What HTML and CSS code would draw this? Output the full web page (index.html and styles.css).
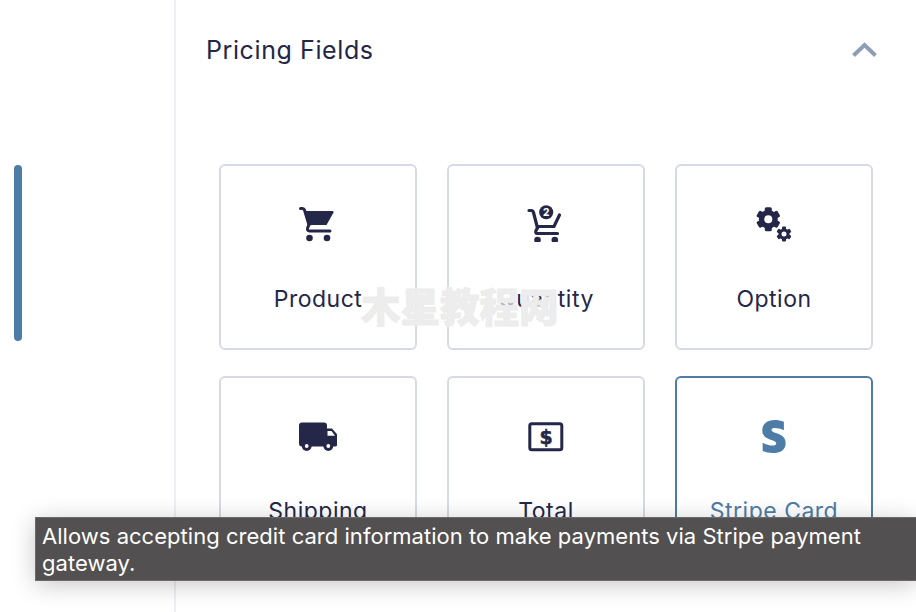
FILE: index.html

```html
<!DOCTYPE html>
<html lang="en">
<head>
  <meta charset="UTF-8" />
  <meta name="viewport" content="width=device-width, initial-scale=1.0"/>
  <title>Pricing Fields</title>
  <link rel="stylesheet" href="styles.css">
</head>
<body>
  <div class="app">
    <aside class="sidebar">
      <div class="scroll-thumb"></div>
    </aside>

    <main class="panel">
      <div class="panel-head">
        <h2>Pricing Fields</h2>
        <svg class="chevron" width="26" height="16" viewBox="0 0 26 16">
          <path d="M1.5 13.5 L12.5 3 L23.5 13.5" fill="none" stroke="#8e9fb5" stroke-width="4"/>
        </svg>
      </div>

      <div class="field-grid">
        <div class="field-card">
          <svg class="field-icon" viewBox="0 0 38 38">
            <path d="M1.5 4.5 H3.5 Q5 4.5 5.5 6 L10 21" fill="none" stroke="#242748" stroke-width="3" stroke-linecap="round"/>
            <path d="M6 7 H33.5 Q35 7 34.5 8.5 L27.5 21 H10 Z" fill="#242748"/>
            <path d="M10 20.5 L8.6 24 Q8 27 10.5 27 H31" fill="none" stroke="#242748" stroke-width="3" stroke-linecap="round"/>
            <circle cx="10.5" cy="34" r="3.3" fill="#242748"/>
            <circle cx="28" cy="34" r="3.3" fill="#242748"/>
          </svg>
          <span class="field-label">Product</span>
        </div>

        <div class="field-card">
          <svg class="field-icon" viewBox="0 0 38 38">
            <path d="M2 6.5 H4 Q6 6.5 6.5 8.5 L10.5 24" fill="none" stroke="#242748" stroke-width="3.2" stroke-linecap="round"/>
            <path d="M32.5 11 L27 22.5 H10.5" fill="none" stroke="#242748" stroke-width="3.2" stroke-linecap="round"/>
            <path d="M10.5 24 L9 26.5 Q8 29.5 10.5 29.5 H30.5" fill="none" stroke="#242748" stroke-width="3.2" stroke-linecap="round"/>
            <circle cx="10.5" cy="36" r="3.3" fill="#242748"/>
            <circle cx="27.8" cy="36" r="3.3" fill="#242748"/>
            <circle cx="19.2" cy="8.3" r="7" fill="#242748"/>
            <text class="badge-num" x="19.2" y="11.8">2</text>
          </svg>
          <span class="field-label">Quantity</span>
        </div>

        <div class="field-card">
          <svg class="field-icon" viewBox="0 0 38 38">
            <g fill="#242748">
              <circle cx="13.3" cy="15.3" r="9.4"/>
              <rect x="9.8" y="3.3" width="7" height="24" rx="1.5"/>
              <rect x="9.8" y="3.3" width="7" height="24" rx="1.5" transform="rotate(60 13.3 15.3)"/>
              <rect x="9.8" y="3.3" width="7" height="24" rx="1.5" transform="rotate(120 13.3 15.3)"/>
              <circle cx="29" cy="30" r="5.6"/>
              <rect x="27" y="22.5" width="4" height="15" rx="1"/>
              <rect x="27" y="22.5" width="4" height="15" rx="1" transform="rotate(60 29 30)"/>
              <rect x="27" y="22.5" width="4" height="15" rx="1" transform="rotate(120 29 30)"/>
            </g>
            <circle cx="13.3" cy="15.3" r="4" fill="#fff"/>
            <circle cx="29" cy="30" r="2.5" fill="#fff"/>
          </svg>
          <span class="field-label">Option</span>
        </div>

        <div class="field-card">
          <svg class="field-icon" viewBox="0 0 38 38">
            <rect x="0" y="6.5" width="28" height="24" rx="3" fill="#242748"/>
            <path d="M26 12.5 H33 L38.3 18.5 V28 Q38.3 30.5 36 30.5 H26 Z" fill="#242748"/>
            <path d="M28.5 15 H32.5 L36 19.8 H28.5 Z" fill="#fff"/>
            <circle cx="7.7" cy="30" r="4.9" fill="#242748"/>
            <circle cx="29.3" cy="30" r="4.9" fill="#242748"/>
            <circle cx="7.7" cy="30" r="1.9" fill="#fff"/>
            <circle cx="29.3" cy="30" r="1.9" fill="#fff"/>
          </svg>
          <span class="field-label">Shipping</span>
        </div>

        <div class="field-card">
          <svg class="field-icon" viewBox="0 0 38 38">
            <rect x="2.8" y="7.8" width="32" height="26" rx="2" fill="none" stroke="#242748" stroke-width="3"/>
            <text class="dollar" x="19" y="27.5">$</text>
          </svg>
          <span class="field-label">Total</span>
        </div>

        <div class="field-card is-active">
          <svg class="field-icon" viewBox="-102 -62 589 589">
            <path fill="#4d7ca6" d="M155.3 154.6c0-22.3 18.6-30.9 48.4-30.9 43.4 0 98.5 13.3 141.9 36.7V26.1C298.3 7.2 251.1 0 203.8 0 88.1 0 11 60.4 11 161.4c0 157.9 216.8 132.3 216.8 200.4 0 26.4-22.9 34.9-54.7 34.9-47.2 0-108.2-19.5-156.1-45.5v128.5a396.09 396.09 0 0 0 156 32.4c118.6 0 200.3-51 200.3-153.6 0-170.2-218-139.7-218-203.9z"/>
          </svg>
          <span class="field-label">Stripe Card</span>
        </div>
      </div>
    </main>
  </div>

  <div class="watermark">木星教程网</div>

  <div class="tooltip">Allows accepting credit card information to make payments via Stripe payment gateway.</div>
</body>
</html>
```

FILE: styles.css

```css
body {
  margin: 0;
  font-family: 'Inter', 'Liberation Sans', sans-serif;
  background: #fff;
  color: #242748;
  overflow: hidden;
}

.app {
  display: flex;
  width: 916px;
  height: 612px;
  overflow: hidden;
}

.sidebar {
  flex: 0 0 176px;
  box-sizing: border-box;
  border-right: 2px solid #eeeef3;
  padding: 165px 0 0 14px;
}

.scroll-thumb {
  width: 8px;
  height: 176px;
  background: #4d7ca6;
  border-radius: 4px;
}

.panel {
  flex: 1;
  padding: 0 43px;
}

.panel-head {
  display: flex;
  align-items: center;
  justify-content: space-between;
  height: 100px;
  margin-left: -13px;
  margin-right: 4px;
}

.panel-head h2 {
  margin: 0;
  font-size: 25px;
  font-weight: 400;
  letter-spacing: 0.6px;
}

.chevron {
  margin-right: -9px;
}

.field-grid {
  display: grid;
  grid-template-columns: repeat(3, 198px);
  grid-auto-rows: 186px;
  column-gap: 30px;
  row-gap: 26px;
  margin-top: 64px;
}

.field-card {
  box-sizing: border-box;
  display: flex;
  flex-direction: column;
  align-items: center;
  border: 2px solid #d8d9e8;
  border-radius: 6px;
  padding-top: 38px;
  background: #fff;
}

.field-card.is-active {
  border-color: #4d7ca6;
  color: #4d7ca6;
}

.field-icon {
  display: block;
  width: 38px;
  height: 38px;
}

.field-label {
  margin-top: 42px;
  font-size: 23px;
  line-height: 30px;
  letter-spacing: 0.5px;
}

.badge-num {
  font-family: 'Inter', sans-serif;
  font-size: 10px;
  font-weight: 800;
  fill: #fff;
  text-anchor: middle;
}

.dollar {
  font-family: 'DejaVu Sans', sans-serif;
  font-size: 19px;
  font-weight: 700;
  fill: #242748;
  stroke: #242748;
  stroke-width: 0.5;
  text-anchor: middle;
}

.watermark {
  position: absolute;
  left: 361px;
  top: 279px;
  font-family: 'Noto Sans CJK SC', sans-serif;
  font-size: 39.5px;
  font-weight: 900;
  line-height: 52px;
  white-space: nowrap;
  color: rgba(236, 236, 236, 0.95);
  -webkit-text-stroke: 1px rgba(236, 236, 236, 0.95);
  text-shadow: 0 0 2px #fff;
}

.tooltip {
  position: absolute;
  left: 35px;
  top: 517px;
  width: 881px;
  height: 64px;
  box-sizing: border-box;
  padding: 5px 40px 0 6px;
  background: #525050;
  border: 1px solid #6b6969;
  border-right: 0;
  color: #fff;
  font-size: 22px;
  line-height: 27px;
  letter-spacing: 0.03px;
  box-shadow: 0 4px 24px rgba(0, 0, 0, 0.22);
}
```
